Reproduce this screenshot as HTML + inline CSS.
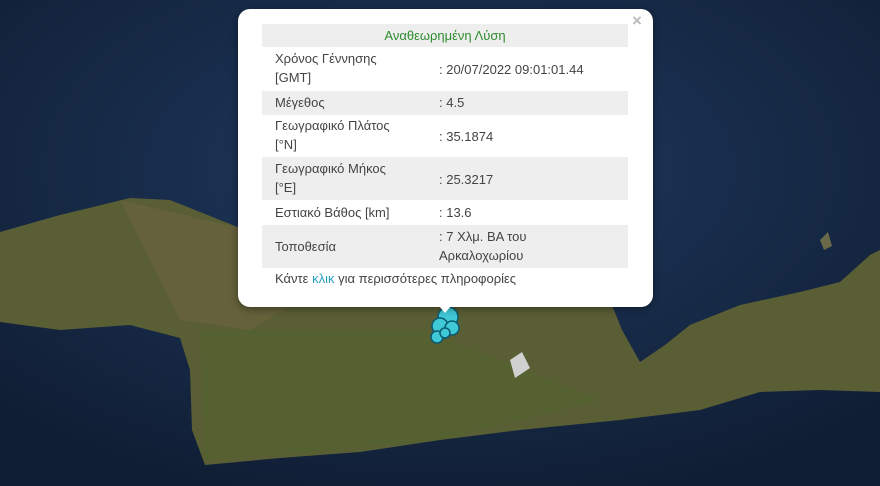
<!DOCTYPE html><html><head><meta charset="utf-8"><style>
body{margin:0;width:880px;height:486px;overflow:hidden;position:relative;background:#15263f;font-family:"Liberation Sans",sans-serif}
svg{position:absolute;left:0;top:0}
.pop{position:absolute;left:238px;top:9px;width:415px;height:298px;background:#fff;border-radius:12px;box-shadow:0 2px 8px rgba(0,0,0,.4)}
.x{position:absolute;left:632px;top:11px;color:#bbb;font-size:17px;font-weight:bold}
.r{position:absolute;left:262px;width:366px;font-size:13px;color:#444;line-height:19px}
.g{background:#eeeeee}
.l{position:absolute;left:13px}.v{position:absolute;left:177px}
.tip{position:absolute;left:434px;top:300px;width:0;height:0;border-left:11px solid transparent;border-right:11px solid transparent;border-top:13px solid #fff}
</style></head><body>
<svg width="880" height="486">
<defs><radialGradient id="s" cx="50%" cy="35%" r="70%"><stop offset="0" stop-color="#1f3a60"/><stop offset="1" stop-color="#101e34"/></radialGradient></defs>
<rect width="880" height="486" fill="url(#s)"/>
<path d="M0,232 L60,215 L130,198 L170,200 L240,228 L320,250 L420,260 L560,280 L610,300 L622,330 L640,362 L665,345 L690,325 L740,305 L800,292 L840,282 L870,255 L880,250 L880,392 L820,390 L760,392 L700,410 L620,420 L520,430 L440,440 L360,452 L280,458 L205,465 L192,430 L190,370 L180,338 L130,325 L60,330 L0,322 Z" fill="#5a5e35"/>
<path d="M200,330 L420,330 L500,360 L600,400 L440,440 L280,455 L205,460 Z" fill="#52632f" opacity=".7"/>
<path d="M120,200 L240,228 L300,300 L250,330 L180,320 Z" fill="#6a6440" opacity=".6"/>
<path d="M510,360 L522,352 L530,368 L515,378 Z" fill="#d0d0d0"/>
<path d="M820,240 L828,232 L832,246 L824,250 Z" fill="#6a6a4a"/>
<g stroke="#0a5a70" stroke-width="1.5" fill="#3fc8d6">
<circle cx="448" cy="317" r="10"/><circle cx="440" cy="326" r="8"/><circle cx="452" cy="328" r="7"/><circle cx="437" cy="337" r="6"/><circle cx="445" cy="333" r="5"/></g>
</svg>
<div class="pop"></div><div class="tip"></div>
<div class="x">×</div>
<div class="r g" style="top:24px;height:23px;text-align:center;color:#2e8b2e;line-height:23px">Αναθεωρημένη Λύση</div>
<div class="r" style="top:49px;height:40px"><span class="l">Χρόνος Γέννησης<br>[GMT]</span><span class="v" style="top:11px">: 20/07/2022 09:01:01.44</span></div>
<div class="r g" style="top:91px;height:24px;line-height:24px"><span class="l">Μέγεθος</span><span class="v">: 4.5</span></div>
<div class="r" style="top:116px;height:40px"><span class="l">Γεωγραφικό Πλάτος<br>[°N]</span><span class="v" style="top:11px">: 35.1874</span></div>
<div class="r g" style="top:157px;height:43px"><span class="l" style="top:2px">Γεωγραφικό Μήκος<br>[°E]</span><span class="v" style="top:13px">: 25.3217</span></div>
<div class="r" style="top:201px;height:24px;line-height:24px"><span class="l">Εστιακό Βάθος [km]</span><span class="v">: 13.6</span></div>
<div class="r g" style="top:225px;height:43px"><span class="l" style="top:12px">Τοποθεσία</span><span class="v" style="top:2px">: 7 Χλμ. ΒΑ του<br>Αρκαλοχωρίου</span></div>
<div class="r" style="top:269px;height:20px"><span class="l">Κάντε <span style="color:#2a9fc0">κλικ</span> για περισσότερες πληροφορίες</span></div>
</body></html>
